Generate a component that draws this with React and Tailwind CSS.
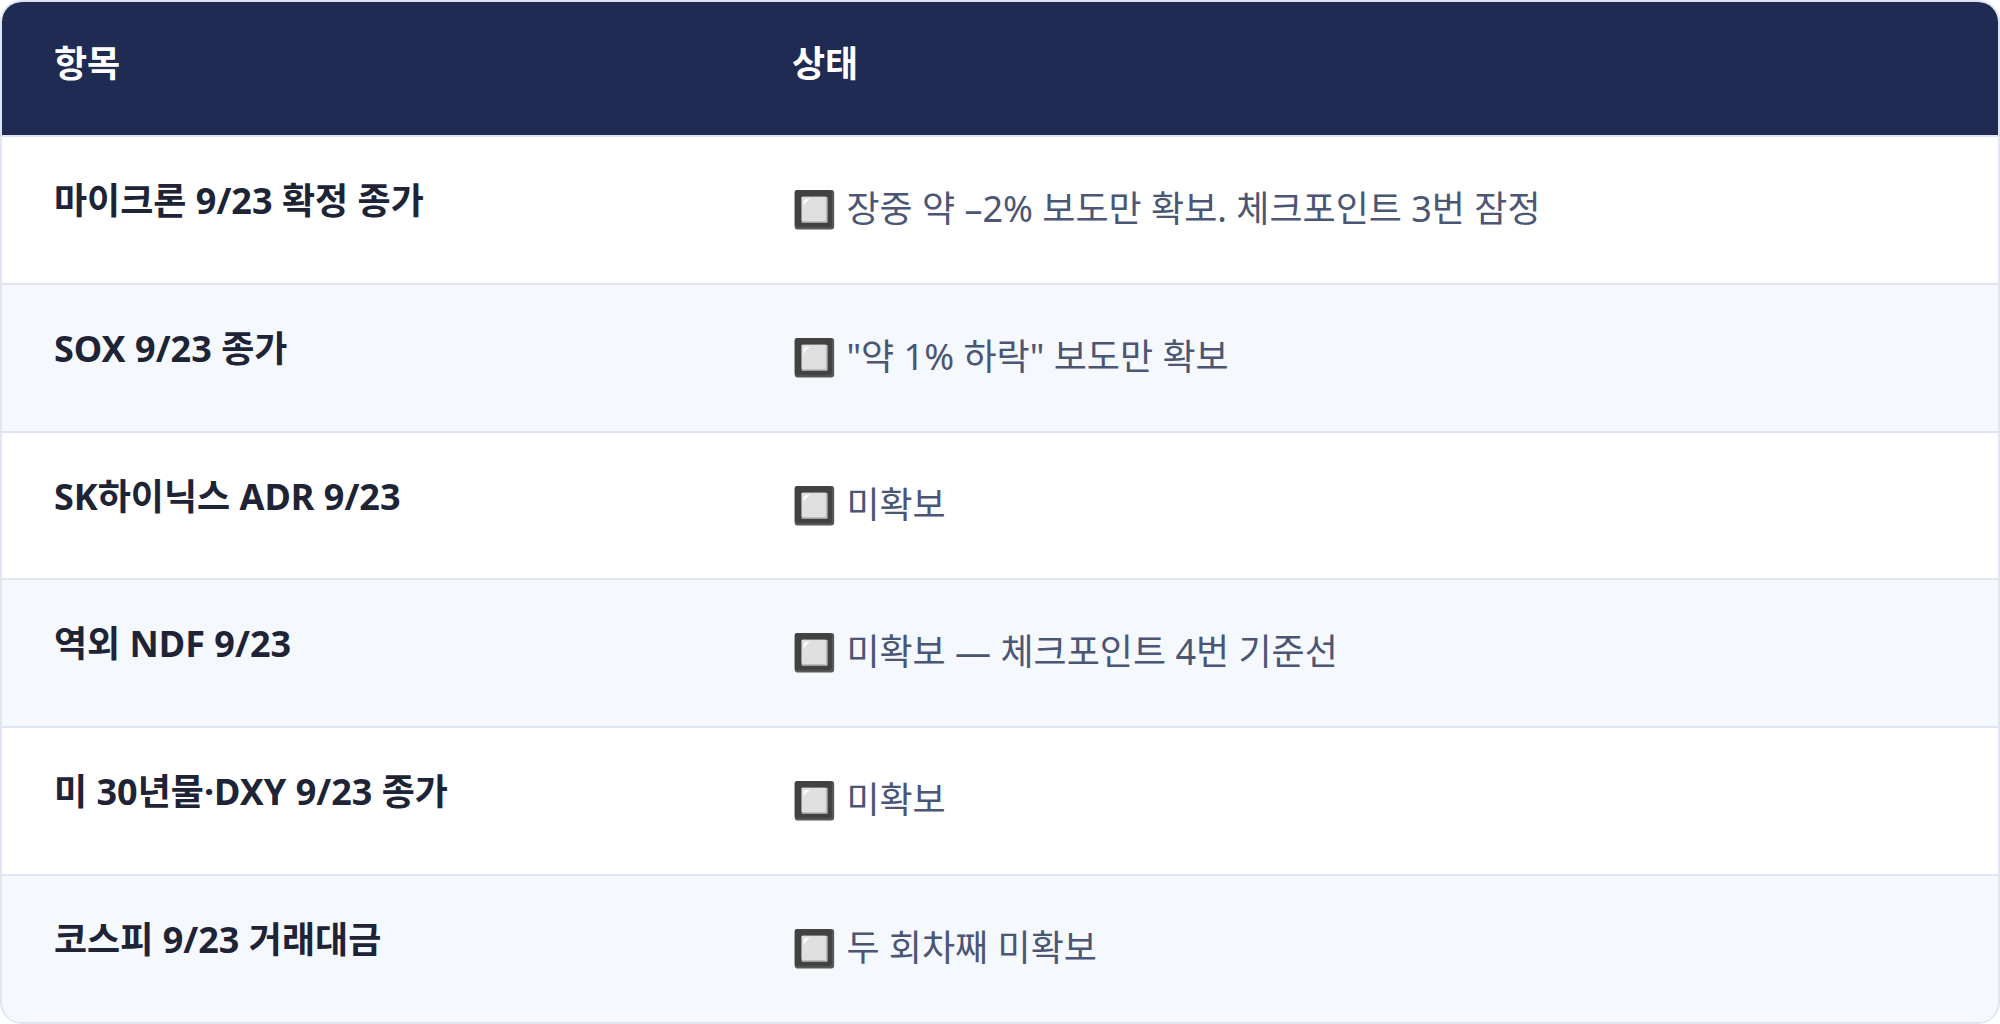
import React from "react";

const rows = [
  ["마이크론 9/23 확정 종가", "장중 약 –2% 보도만 확보. 체크포인트 3번 잠정"],
  ["SOX 9/23 종가", "\"약 1% 하락\" 보도만 확보"],
  ["SK하이닉스 ADR 9/23", "미확보"],
  ["역외 NDF 9/23", "미확보 — 체크포인트 4번 기준선"],
  ["미 30년물·DXY 9/23 종가", "미확보"],
  ["코스피 9/23 거래대금", "두 회차째 미확보"],
];

export default function App() {
  return (
    <div
      className="w-[2000px] h-[1024px] bg-white"
      style={{ fontFamily: '"Noto Sans", "Noto Sans CJK KR", sans-serif' }}
    >
      <div className="h-[1024px] rounded-[22px] border-2 border-[#dfe6f3] overflow-hidden flex flex-col">
        <div className="grid grid-cols-[738px_1fr] h-[133px] bg-[#1f2b53] text-white font-bold text-[36px] leading-[54px]">
          <div className="pl-[52px] pt-[35px]">항목</div>
          <div className="pl-[52px] pt-[35px]">상태</div>
        </div>
        {rows.map(([a, b], i) => (
          <div
            key={i}
            className={`grid grid-cols-[738px_1fr] h-[148px] border-t-2 border-[#dfe6f3] text-[36px] leading-[54px] ${
              i % 2 === 1 ? "bg-[#f5f8fd]" : "bg-white"
            }`}
          >
            <div className="pl-[52px] pt-[37px] font-bold text-[#1e2435]">{a}</div>
            <div className="pl-[52px] pt-[45px] text-[#4b5675]">🔲 {b}</div>
          </div>
        ))}
      </div>
    </div>
  );
}
